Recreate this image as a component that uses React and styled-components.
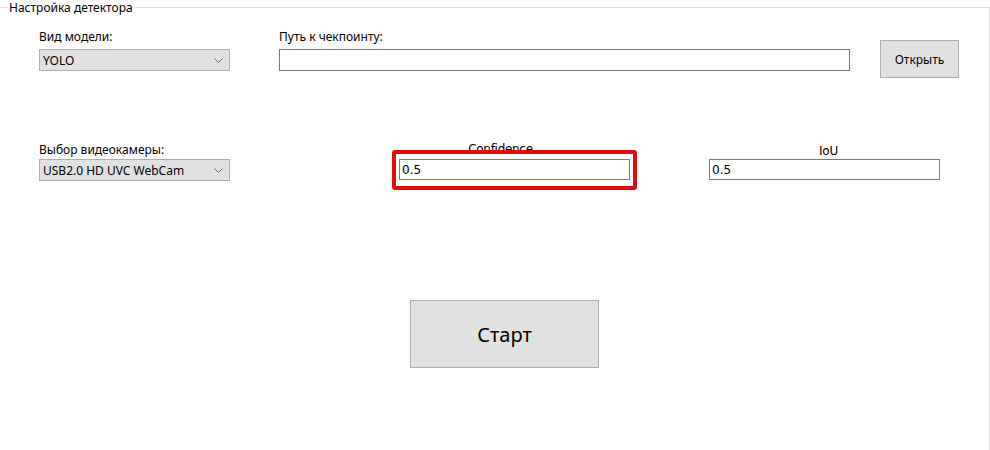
import styled, { createGlobalStyle } from "styled-components";

const GlobalStyle = createGlobalStyle`
  html, body {
    margin: 0;
    padding: 0;
    background: #ffffff;
    overflow: hidden;
  }
  body {
    font-family: "Noto Sans", "Open Sans", sans-serif;
    color: #000000;
  }
`;

const Group = styled.fieldset`
  box-sizing: border-box;
  width: 990px;
  height: 450px;
  margin: 0;
  padding: 0;
  border: 1px solid #dcdcdc;
  border-left: none;
  border-bottom: none;
  min-width: 0;
`;

const Legend = styled.legend`
  margin-left: 7px;
  padding: 0 2px;
  font-size: 12px;
  line-height: 15px;
  color: #000;
`;

const Row = styled.div`
  display: flex;
  align-items: flex-start;
  padding-left: 39px;
  margin-top: ${(p) => p.$top}px;
`;

const Field = styled.div`
  position: relative;
  display: flex;
  flex-direction: column;
  gap: ${(p) => p.$gap}px;
  width: ${(p) => p.$width}px;
  margin-left: ${(p) => p.$left || 0}px;
`;

const Label = styled.div`
  font-size: 12px;
  line-height: 16px;
  white-space: nowrap;
`;

const CenterLabel = styled.div`
  font-family: "DejaVu Sans", Tahoma, sans-serif;
  font-size: 12px;
  line-height: 16px;
  letter-spacing: -0.3px;
  text-align: center;
  white-space: nowrap;
  transform: translate(${(p) => p.$dx}px, ${(p) => p.$dy || 0}px);
`;

const Combo = styled.div`
  box-sizing: border-box;
  height: 22px;
  display: flex;
  align-items: center;
  justify-content: space-between;
  padding: 0 6px 0 3px;
  background: #e1e1e1;
  border: 1px solid #adadad;
  font-size: 12px;
  white-space: nowrap;
`;

const TextBox = styled.div`
  box-sizing: border-box;
  height: ${(p) => p.$height || 21}px;
  display: flex;
  align-items: center;
  padding: 0 2px;
  background: #ffffff;
  border: 1px solid #7a7a7a;
  font-family: "DejaVu Sans", Tahoma, sans-serif;
  font-size: 12px;
`;

const Highlight = styled.div`
  position: absolute;
  left: -7px;
  top: 8px;
  width: 245px;
  height: 40px;
  box-sizing: border-box;
  border: 4px solid #e50a0a;
  border-radius: 3px;
  pointer-events: none;
`;

const Button = styled.button`
  box-sizing: border-box;
  width: ${(p) => p.$width}px;
  height: ${(p) => p.$height}px;
  margin-left: ${(p) => p.$left}px;
  margin-top: ${(p) => p.$top || 0}px;
  background: #e1e1e1;
  border: 1px solid #adadad;
  border-radius: 0;
  padding: 0;
  font-family: "Noto Sans", "Open Sans", sans-serif;
  font-size: ${(p) => p.$size}px;
  color: #000;
`;

function Chevron() {
  return (
    <svg width="9" height="5" viewBox="0 0 9 5" fill="none">
      <path d="M0.5 0.5 L4.5 4.5 L8.5 0.5" stroke="#606060" strokeWidth="1" />
    </svg>
  );
}

export default function App() {
  return (
    <>
      <GlobalStyle />
      <Group>
        <Legend>Настройка детектора</Legend>
        <Row $top={14}>
          <Field $width={191} $gap={4}>
            <Label>Вид модели:</Label>
            <Combo>
              YOLO
              <Chevron />
            </Combo>
          </Field>
          <Field $width={571} $gap={4} $left={49}>
            <Label>Путь к чекпоинту:</Label>
            <TextBox $height={22} />
          </Field>
          <Button $width={79} $height={38} $left={30} $top={11} $size={12}>
            Открыть
          </Button>
        </Row>
        <Row $top={64}>
          <Field $width={191} $gap={1}>
            <Label>Выбор видеокамеры:</Label>
            <Combo>
              USB2.0 HD UVC WebCam
              <Chevron />
            </Combo>
          </Field>
          <Field $width={231} $gap={1} $left={169}>
            <CenterLabel $dx={-14} $dy={-1}>Confidence</CenterLabel>
            <TextBox>0.5</TextBox>
            <Highlight />
          </Field>
          <Field $width={231} $gap={1} $left={79}>
            <CenterLabel $dx={4} $dy={1}>IoU</CenterLabel>
            <TextBox>0.5</TextBox>
          </Field>
        </Row>
        <Row $top={119}>
          <Button $width={189} $height={68} $left={371} $size={20}>
            Старт
          </Button>
        </Row>
      </Group>
    </>
  );
}
